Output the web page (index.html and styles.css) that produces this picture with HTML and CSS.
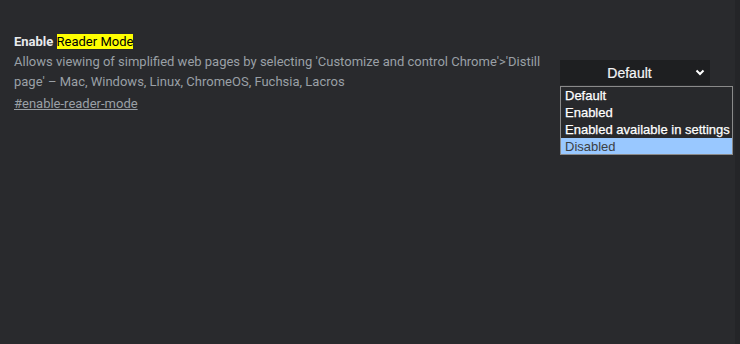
FILE: index.html
```html
<!DOCTYPE html>
<html lang="en">
<head>
    <meta charset="UTF-8">
    <meta name="viewport" content="width=device-width, initial-scale=1.0">
    <title>Experiments</title>
    <link rel="stylesheet" href="styles.css">
</head>
<body>
    <div class="page">
        <div class="experiment">
            <div class="experiment-text">
                <h3 class="experiment-name">Enable <mark class="search-highlight">Reader Mode</mark></h3>
                <p class="description">Allows viewing of simplified web pages by selecting 'Customize and control Chrome'&gt;'Distill page' – Mac, Windows, Linux, ChromeOS, Fuchsia, Lacros</p>
                <a class="permalink" href="#enable-reader-mode">#enable-reader-mode</a>
            </div>
            <div class="experiment-actions">
                <div class="select">
                    <span class="select-value">Default</span>
                    <svg class="chevron" width="10" height="7" viewBox="0 0 10 7">
                        <path d="M1.5 1.5 L5 5 L8.5 1.5" fill="none" stroke="#fff" stroke-width="2"/>
                    </svg>
                </div>
                <ul class="select-popup">
                    <li>Default</li>
                    <li>Enabled</li>
                    <li>Enabled available in settings</li>
                    <li class="selected">Disabled</li>
                </ul>
            </div>
        </div>
        <div class="scrollbar"></div>
    </div>
</body>
</html>
```
FILE: styles.css
```css
html, body {
    margin: 0;
    height: 100%;
}
body {
    background-color: #292a2d;
    font-family: Roboto, "Liberation Sans", sans-serif;
    font-size: 13px;
    overflow: hidden;
}
.page {
    display: flex;
    height: 100%;
}
.experiment {
    flex: 1;
    display: flex;
    padding: 32px 0 0 14px;
}
.experiment-text {
    flex: 1;
}
.experiment-name {
    margin: 0;
    font-size: 13px;
    font-weight: 700;
    line-height: 20px;
    color: #e8eaed;
}
.search-highlight {
    background-color: #ffff00;
    color: #000;
    font-weight: 400;
}
.description {
    margin: 0;
    max-width: 540px;
    line-height: 20px;
    color: #9aa0a6;
}
.permalink {
    display: inline-block;
    margin-top: 2px;
    line-height: 20px;
    color: #9aa0a6;
}
.experiment-actions {
    position: relative;
    width: 150px;
    margin: 28px 25px 0 16px;
}
.select {
    display: flex;
    align-items: center;
    height: 25px;
    background-color: #1e1f21;
    color: #f1f3f4;
    font-family: "Liberation Sans", Arial, sans-serif;
    font-size: 14px;
    -webkit-text-stroke: 0.2px #fff;
}
.select-value {
    flex: 1;
    text-align: center;
    padding-left: 4px;
}
.chevron {
    margin-right: 5px;
}
.select-popup {
    position: absolute;
    top: 26px;
    left: 0;
    margin: 0;
    padding: 0;
    list-style: none;
    border: 1px solid #8a8a8a;
    background-color: #28292c;
    font-family: "Liberation Sans", Arial, sans-serif;
    font-size: 13px;
    color: #fff;
    white-space: nowrap;
    -webkit-text-stroke: 0.25px #fff;
}
.select-popup li {
    height: 17px;
    line-height: 17px;
    padding: 0 2px 0 4px;
}
.select-popup .selected {
    height: 16px;
    background-color: #99c8ff;
    color: #3c4043;
    -webkit-text-stroke: 0;
}
.scrollbar {
    width: 5px;
    background-color: #242528;
}
```
